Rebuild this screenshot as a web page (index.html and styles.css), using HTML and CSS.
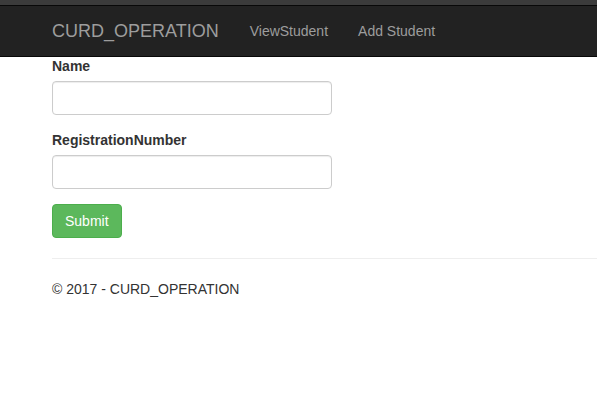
FILE: index.html
```html
<!DOCTYPE html>
<html lang="en">
<head>
    <meta charset="UTF-8">
    <meta name="viewport" content="width=device-width, initial-scale=1.0">
    <title>Add Student - CURD_OPERATION</title>
    <link rel="stylesheet" href="styles.css">
</head>
<body>
    <div class="top-strip"></div>
    <div class="navbar">
        <div class="navbar-container">
            <a class="navbar-brand" href="#">CURD_OPERATION</a>
            <ul class="nav">
                <li><a href="#">ViewStudent</a></li>
                <li><a href="#">Add Student</a></li>
            </ul>
        </div>
    </div>

    <div class="body-content">
        <form class="student-form">
            <div class="form-group">
                <label for="name">Name</label>
                <input type="text" class="form-control" id="name">
            </div>
            <div class="form-group">
                <label for="regno">RegistrationNumber</label>
                <input type="text" class="form-control" id="regno">
            </div>
            <button type="button" class="btn btn-success">Submit</button>
        </form>

        <hr>
        <footer>
            <p>&copy; 2017 - CURD_OPERATION</p>
        </footer>
    </div>
</body>
</html>
```

FILE: styles.css
```css
body {
    font-family: "Liberation Sans", Arial, Helvetica, sans-serif;
    font-size: 14px;
    line-height: 20px;
    color: #333;
    background-color: #fff;
    margin: 0;
    padding: 0;
}

.top-strip {
    height: 5px;
    background-color: #3b3b3b;
}

.navbar {
    background-color: #222;
    border-top: 1px solid #080808;
    border-bottom: 1px solid #080808;
    margin-bottom: -1px;
}
.navbar-container {
    display: flex;
    align-items: center;
    height: 50px;
    padding-left: 37px;
}
.navbar-brand {
    color: #9d9d9d;
    font-size: 18px;
    line-height: 20px;
    padding: 15px 16px 15px 15px;
    text-decoration: none;
}
.nav {
    display: flex;
    list-style: none;
    margin: 0;
    padding: 0;
}
.nav a {
    display: block;
    color: #9d9d9d;
    text-decoration: none;
    padding: 15px;
}

.body-content {
    padding-left: 52px;
}

.student-form {
    width: 280px;
}
.form-group {
    margin-bottom: 15px;
}
.form-group label {
    display: block;
    font-weight: bold;
    margin-bottom: 5px;
}
.form-control {
    display: block;
    box-sizing: border-box;
    width: 280px;
    height: 34px;
    padding: 6px 12px;
    font-family: inherit;
    font-size: 14px;
    color: #555;
    background-color: #fff;
    border: 1px solid #ccc;
    border-radius: 4px;
    box-shadow: inset 0 1px 1px rgba(0, 0, 0, .075);
    margin: 0;
}

.btn {
    display: inline-block;
    box-sizing: border-box;
    height: 34px;
    padding: 6px 12px;
    font-family: inherit;
    font-size: 14px;
    line-height: 20px;
    border-radius: 4px;
    cursor: pointer;
    margin: 0;
    vertical-align: top;
}
.btn-success {
    color: #fff;
    background-color: #5cb85c;
    border: 1px solid #4cae4c;
}

hr {
    margin: 20px 0;
    border: 0;
    border-top: 1px solid #eee;
}

footer p {
    margin: 0 0 10px;
}
```
